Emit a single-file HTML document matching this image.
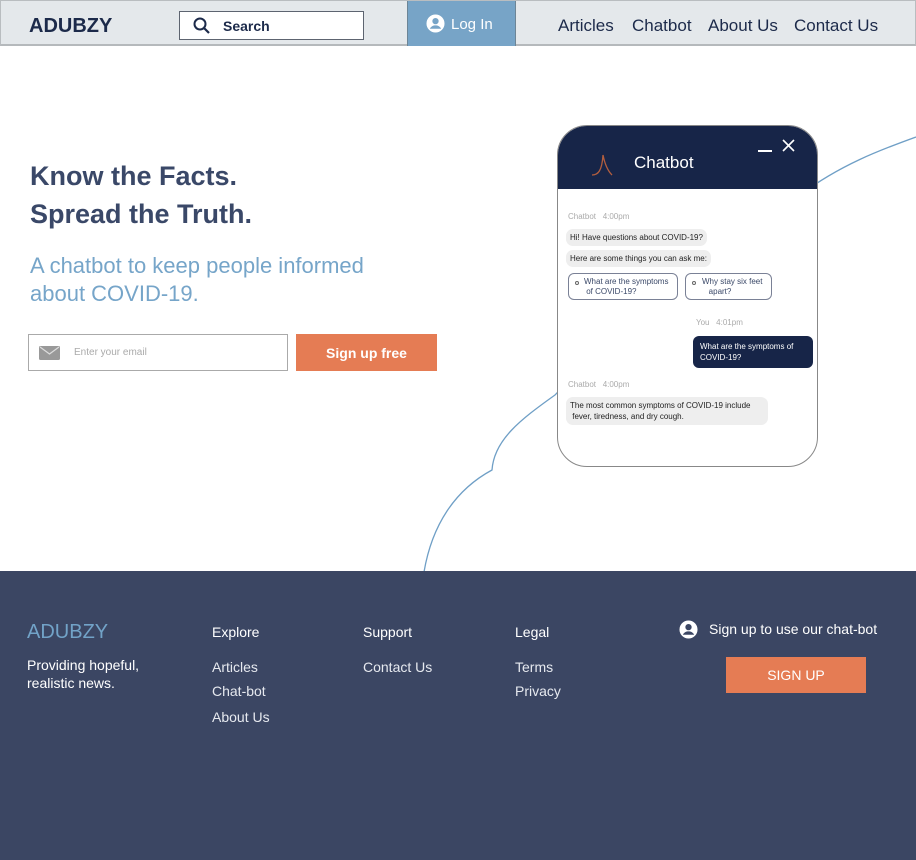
<!DOCTYPE html>
<html><head><meta charset="utf-8"><style>
*{margin:0;padding:0;box-sizing:border-box}
body{width:916px;height:860px;overflow:hidden;background:#fff;font-family:"Liberation Sans",sans-serif;position:relative}
.a{position:absolute}
header{position:absolute;left:0;top:0;width:916px;height:46px;background:#e4e8eb;border:1px solid #b9bdc0;border-bottom:2px solid #b5b9bc}
footer{position:absolute;left:0;top:571px;width:916px;height:289px;background:#3b4663}
.nav{color:#1c2a4a;font-size:17px;top:15px}
.f{color:#e6e9ef;font-size:14px}
.bub{position:absolute;background:#eeeeee;border-radius:7px;font-size:8px;color:#222;padding:3px 4px;line-height:11px}
.meta{position:absolute;font-size:8px;color:#aaa}
</style></head><body>
<header>
<div class="a" style="left:28px;top:14px;font-size:20px;font-weight:bold;color:#1c2a4a">ADUBZY</div>
<div class="a" style="left:178px;top:10px;width:185px;height:29px;background:#fff;border:1px solid #5d6470"></div>
<svg class="a" style="left:191px;top:15px" width="20" height="20" viewBox="0 0 20 20"><circle cx="8" cy="8" r="5.5" fill="none" stroke="#1c2a4a" stroke-width="2"/><line x1="12" y1="12" x2="17" y2="17" stroke="#1c2a4a" stroke-width="2.2"/></svg>
<div class="a" style="left:222px;top:17px;font-size:14px;font-weight:bold;color:#1c2a4a">Search</div>
<div class="a" style="left:406px;top:0;width:109px;height:45px;background:#77a4c7;border-left:1px solid #6d8596;border-right:1px solid #6d8596"></div>
<svg class="a" style="left:425px;top:13px" width="19" height="19" viewBox="0 0 20 20"><circle cx="10" cy="10" r="9.5" fill="#fff"/><circle cx="10" cy="7.5" r="3.3" fill="#77a4c7"/><path d="M4 15.5c1.5-2.5 3.5-3.5 6-3.5s4.5 1 6 3.5" fill="#77a4c7"/></svg>
<div class="a" style="left:450px;top:15px;font-size:15px;color:#fff">Log In</div>
<div class="a nav" style="left:557px">Articles</div>
<div class="a nav" style="left:631px">Chatbot</div>
<div class="a nav" style="left:707px">About Us</div>
<div class="a nav" style="left:793px">Contact Us</div>
</header>
<svg class="a" style="left:0;top:0" width="916" height="600"><path d="M916,137 C880,150 840,165 800,195 L640,300 C600,340 570,380 555,395 C520,420 494,440 492,470 C455,490 432,525 424,572" fill="none" stroke="#6f9fc6" stroke-width="1.3"/></svg>
<div class="a" style="left:30px;top:157px;font-size:27px;line-height:38px;font-weight:bold;color:#3a4868">Know the Facts.<br>Spread the Truth.</div>
<div class="a" style="left:30px;top:252px;font-size:22px;line-height:28px;color:#76a5c9">A chatbot to keep people informed<br>about COVID-19.</div>
<div class="a" style="left:28px;top:334px;width:260px;height:37px;border:1px solid #aaa;background:#fff"></div>
<svg class="a" style="left:39px;top:346px" width="21" height="14" viewBox="0 0 21 14"><rect width="21" height="14" rx="1.5" fill="#999"/><path d="M1 1l9.5 7L20 1" fill="none" stroke="#ddd" stroke-width="1.2"/></svg>
<div class="a" style="left:74px;top:347px;font-size:10px;color:#aaa">Enter your email</div>
<div class="a" style="left:296px;top:334px;width:141px;height:37px;background:#e57c54;color:#fff;font-size:14px;font-weight:bold;text-align:center;line-height:38px">Sign up free</div>
<div class="a" style="left:557px;top:125px;width:261px;height:342px;border:1px solid #888;border-radius:30px;background:#fff;overflow:hidden">
<div class="a" style="left:0;top:0;width:261px;height:63px;background:#172548"></div>
<svg class="a" style="left:30px;top:25px" width="30" height="28" viewBox="0 0 30 28"><path d="M4 24C10 24 14 20 15 4C17 14 20 20 24 24" fill="none" stroke="#b35e3e" stroke-width="1.3"/></svg>
<div class="a" style="left:76px;top:27px;font-size:17px;color:#fff">Chatbot</div>
<div class="a" style="left:200px;top:24px;width:14px;height:1.5px;background:#fff"></div>
<svg class="a" style="left:224px;top:13px" width="13" height="13"><path d="M1 1L12 12M12 1L1 12" stroke="#fff" stroke-width="1.6"/></svg>
<div class="meta" style="left:10px;top:86px">Chatbot&nbsp;&nbsp; 4:00pm</div>
<div class="bub" style="left:8px;top:103px">Hi! Have questions about COVID-19?</div>
<div class="bub" style="left:8px;top:124px">Here are some things you can ask me:</div>
<div class="a" style="left:10px;top:147px;width:110px;height:27px;border:1px solid #7a8196;border-radius:6px;font-size:8px;color:#3a4868;line-height:10px;padding:3px 0 0 15px">What are the symptoms<br>&nbsp;of COVID-19?</div>
<div class="a" style="left:127px;top:147px;width:87px;height:27px;border:1px solid #7a8196;border-radius:6px;font-size:8px;color:#3a4868;line-height:10px;padding:3px 0 0 16px">Why stay six feet<br>&nbsp;&nbsp; apart?</div>
<div class="a" style="left:17px;top:155px;width:4px;height:4px;border:1px solid #666;border-radius:50%"></div>
<div class="a" style="left:134px;top:155px;width:4px;height:4px;border:1px solid #666;border-radius:50%"></div>
<div class="meta" style="left:138px;top:192px">You&nbsp;&nbsp; 4:01pm</div>
<div class="a" style="left:135px;top:210px;width:120px;height:32px;background:#172548;border-radius:6px;color:#fff;font-size:8px;line-height:11px;padding:5px 7px">What are the symptoms of COVID-19?</div>
<div class="meta" style="left:10px;top:254px">Chatbot&nbsp;&nbsp; 4:00pm</div>
<div class="bub" style="left:8px;top:271px;width:202px">The most common symptoms of COVID-19 include<br>&nbsp;fever, tiredness, and dry cough.</div>
</div>
<footer>
<div class="a" style="left:27px;top:50px;font-size:20px;color:#72a3c8">ADUBZY</div>
<div class="a f" style="left:27px;top:85px;line-height:18px;color:#fff">Providing hopeful,<br>realistic news.</div>
<div class="a f" style="left:212px;top:53px;color:#fff">Explore</div>
<div class="a f" style="left:212px;top:88px">Articles</div>
<div class="a f" style="left:212px;top:112px">Chat-bot</div>
<div class="a f" style="left:212px;top:138px">About Us</div>
<div class="a f" style="left:363px;top:53px;color:#fff">Support</div>
<div class="a f" style="left:363px;top:88px">Contact Us</div>
<div class="a f" style="left:515px;top:53px;color:#fff">Legal</div>
<div class="a f" style="left:515px;top:88px">Terms</div>
<div class="a f" style="left:515px;top:112px">Privacy</div>
<svg class="a" style="left:679px;top:49px" width="19" height="19" viewBox="0 0 20 20"><circle cx="10" cy="10" r="9.5" fill="#fff"/><circle cx="10" cy="7.5" r="3.3" fill="#3b4663"/><path d="M4 15.5c1.5-2.5 3.5-3.5 6-3.5s4.5 1 6 3.5" fill="#3b4663"/></svg>
<div class="a f" style="left:709px;top:50px;color:#fff">Sign up to use our chat-bot</div>
<div class="a" style="left:726px;top:86px;width:140px;height:36px;background:#e57c54;color:#fff;font-size:14px;text-align:center;line-height:37px">SIGN UP</div>
</footer>
</body></html>
